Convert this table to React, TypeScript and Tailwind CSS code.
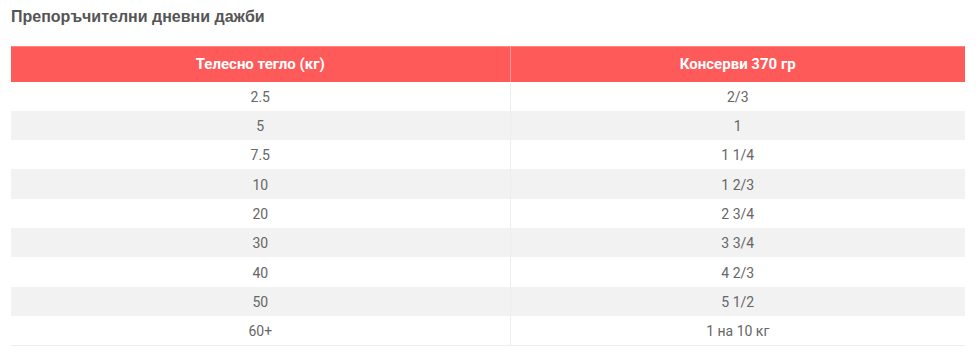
const rows: [string, string][] = [
  ['2.5', '2/3'],
  ['5', '1'],
  ['7.5', '1 1/4'],
  ['10', '1 2/3'],
  ['20', '2 3/4'],
  ['30', '3 3/4'],
  ['40', '4 2/3'],
  ['50', '5 1/2'],
  ['60+', '1 на 10 кг'],
]

export default function App() {
  return (
    <div className="w-[979px] h-[352px] bg-white pl-[11px] pt-[5px] font-['Roboto',sans-serif]">
      {/* Title */}
      <h3 className="text-[16px] leading-[24px] font-bold text-[#555] font-['Liberation_Sans',Arial,sans-serif]">
        Препоръчителни дневни дажби
      </h3>

      {/* Table */}
      <table className="mt-[17px] w-[954px] border-collapse table-fixed">
        <thead>
          <tr className="bg-[#ff5a5a] border-t border-t-[#ff8585]">
            <th className="w-[499px] h-[35px] p-0 text-[15px] font-bold text-white text-center border-r border-r-[#ff9a9a]">
              Телесно тегло (кг)
            </th>
            <th className="h-[35px] p-0 text-[15px] font-bold text-white text-center">Консерви 370 гр</th>
          </tr>
        </thead>
        <tbody>
          {rows.map(([weight, cans], i) => (
            <tr key={weight} className={i % 2 === 1 ? 'bg-[#f2f2f2]' : 'bg-white'}>
              <td className="h-[29.33px] p-0 pt-[2px] text-center text-[14px] text-[#666] border-r border-r-[#eeeeee]">{weight}</td>
              <td className="h-[29.33px] p-0 pt-[2px] text-center text-[14px] text-[#666]">{cans}</td>
            </tr>
          ))}
          <tr>
            <td colSpan={2} className="h-0 p-0 border-t border-t-[#eeeeee]" />
          </tr>
        </tbody>
      </table>
    </div>
  )
}
